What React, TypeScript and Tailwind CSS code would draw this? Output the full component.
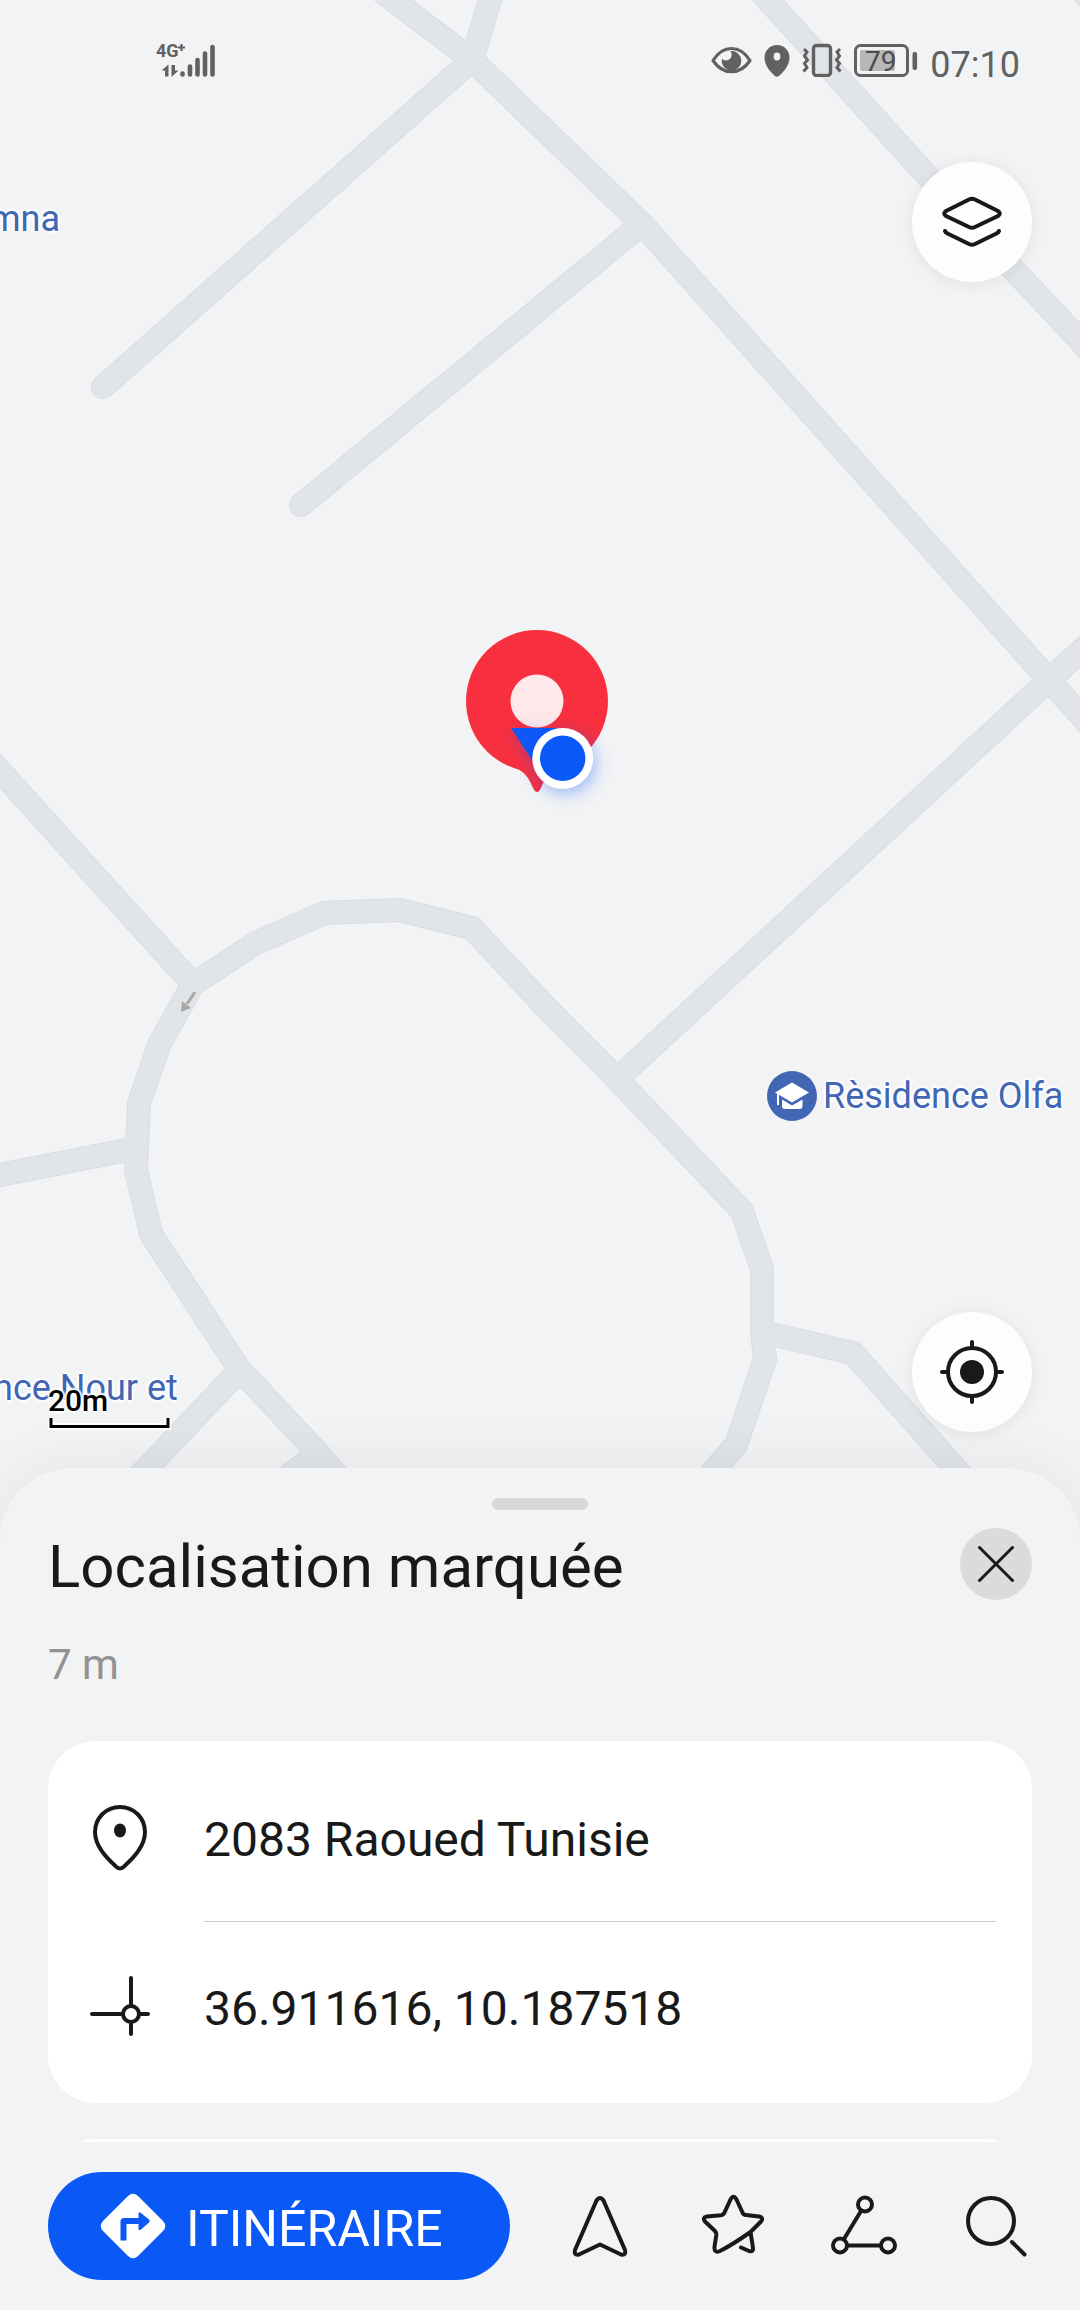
import type { ReactNode } from "react";

const ROADS = [
  "M385 -6L393 0L472 60L642 224L1049 680L1090 726",
  "M491 -10L490 0L472 60L103 387",
  "M642 224L301 505",
  "M762 -7L768 0L930 179L1011 267L1090 351",
  "M1070 -22L1110 20",
  "M1090 643L1049 680L617 1079",
  "M-10 760L0 771L193 984L256 943L324 913L400 910L472 928L540 1001L617 1079L742 1211L762 1269L762 1332L765 1359L736 1445L715 1469L690 1496",
  "M193 984L160 1043L139 1103L137 1148L136 1170L151 1234L240 1370L318 1453L350 1490",
  "M-10 1177L0 1175L137 1148",
  "M240 1370L146 1469L110 1506",
  "M318 1454L290 1474L262 1500",
  "M762 1332L853 1353L955 1468L1090 1620",
];

const HALO =
  "[text-shadow:0_0_2px_#fff,0_0_3px_#fff,2px_0_2px_#fff,-2px_0_2px_#fff,0_2px_2px_#fff,0_-2px_2px_#fff]";

function MapCanvas() {
  return (
    <svg
      className="absolute inset-0 h-full w-full"
      viewBox="0 0 1080 1540"
      preserveAspectRatio="xMidYMin slice"
      aria-hidden="true"
    >
      <g fill="none" strokeLinecap="round" strokeLinejoin="miter" strokeMiterlimit="3">
        <g stroke="#dadde1" strokeWidth="24">
          {ROADS.map((d) => (
            <path key={d} d={d} />
          ))}
        </g>
        <g stroke="#e1e4e9" strokeWidth="22">
          {ROADS.map((d) => (
            <path key={d} d={d} />
          ))}
        </g>
      </g>
      <path d="M195 992L187 1004" stroke="#aaa8a3" strokeWidth="3" />
      <path d="M181 1012L182 1001L191 1008Z" fill="#aaa8a3" />
    </svg>
  );
}

function PositionMarker() {
  return (
    <svg className="absolute top-[620px] left-[460px] h-[190px] w-[160px]" viewBox="0 0 160 190" aria-hidden="true">
      <defs>
        <filter id="glow" x="-60%" y="-60%" width="220%" height="220%">
          <feDropShadow dx="3" dy="5" stdDeviation="8" floodColor="#0a59f7" floodOpacity="0.36" />
        </filter>
      </defs>
      <circle cx="77" cy="81" r="71" fill="#f82f3f" />
      <path d="M47 143C62 151 67 153 73 168Q77 176 81 168C87 153 92 151 107 143Z" fill="#f82f3f" />
      <circle cx="77" cy="81" r="26.5" fill="#fee8ea" />
      <g filter="url(#glow)">
        <path d="M51 108H98L76 146Z" fill="#0a59f7" />
        <circle cx="102.7" cy="138.3" r="30.4" fill="#fff" />
      </g>
      <circle cx="102.7" cy="138.3" r="22.7" fill="#0a59f7" />
    </svg>
  );
}

function StatusBar() {
  return (
    <header className="relative flex items-baseline justify-between pt-[43px] pr-[60px] pl-[156px] text-[#616161]">
      <div className="relative h-[34px] w-[62px]">
        <span className="absolute -top-[2px] left-0 text-[18px] leading-[20px] font-bold">
          4G
        </span>
        <svg className="absolute inset-0" width="62" height="34" viewBox="2 0 62 34" fill="currentColor" aria-label="Signal">
          <path d="M24 4.500h7M27.500 1v7" stroke="currentColor" strokeWidth="2.200" />
          <path d="M14.500 33.500V21.500L7.500 27.500H11V33.500ZM17.500 22V34L24.500 27.500H21V22Z" />
          <g stroke="currentColor" strokeWidth="4.600" strokeLinecap="round">
            <path d="M28.500 30.500V31.500M36 23.500V31.500M43.500 17V31.500M51 10.500V31.500M58.500 4V31.500" />
          </g>
        </svg>
      </div>
      <div className="flex items-baseline gap-3">
        <svg width="41" height="34" viewBox="0 0 41 34" aria-label="Confort visuel">
          <path d="M2 17.500C12 1.500 29 1.500 39 17.500C29 32.500 12 32.500 2 17.500Z" fill="none" stroke="currentColor" strokeWidth="3.200" strokeLinejoin="round" />
          <path d="M20.500 8a9.800 9.800 0 1 1-9.600 7.700a5 5 0 1 0 8.300-7.600Z" fill="currentColor" />
        </svg>
        <svg width="26" height="34" viewBox="0 0 26 34" aria-label="Localisation">
          <path fillRule="evenodd" d="M13 2C20 2 25.500 7.500 25.500 14.500C25.500 22 20 28.500 15 33Q13 34.500 11 33C6 28.500.5 22 .5 14.500C.5 7.500 6 2 13 2ZM13 9.500a3.400 4 0 1 0 0 8a3.400 4 0 1 0 0-8Z" fill="currentColor" />
        </svg>
        <svg width="40" height="34" viewBox="0 0 40 34" fill="none" stroke="currentColor" aria-label="Vibreur">
          <rect x="11.500" y="2.500" width="17" height="30" rx="3" strokeWidth="3.400" />
          <path d="M2 6L5 9L2.500 13L5.500 17L2.500 20.500L5 24.500L1.500 28.500M38 6L35 9L37.500 13L34.500 17L37.500 20.500L35 24.500L38.500 28.500" strokeWidth="3" />
        </svg>
        <svg width="64" height="34" viewBox="0 0 64 34" aria-label="Batterie">
          <rect x="1.500" y="2.500" width="52" height="30" rx="5" fill="none" stroke="currentColor" strokeWidth="3" />
          <rect x="6" y="7" width="35" height="21" rx="2" fill="#b6b7b8" />
          <rect x="58.500" y="9" width="4.600" height="18" rx="2" fill="currentColor" />
          <text x="11" y="28" fontSize="28" fill="#4c4c4c">
            79
          </text>
        </svg>
        <time className="text-[36px] leading-[42px]">07:10</time>
      </div>
    </header>
  );
}

function RoundButton({ label, children }: { label: string; children: ReactNode }) {
  return (
    <button
      type="button"
      aria-label={label}
      className="flex size-[120px] items-center justify-center rounded-full bg-[#fdfdfd] text-[#191919] shadow-[0_2px_16px_rgba(0,0,0,0.08)]"
    >
      {children}
    </button>
  );
}

function StrokeIcon({ children }: { children: ReactNode }) {
  return (
    <svg
      className="size-[72px] shrink-0"
      viewBox="0 0 72 72"
      fill="none"
      stroke="currentColor"
      strokeWidth="4"
      strokeLinecap="round"
      strokeLinejoin="round"
      aria-hidden="true"
    >
      {children}
    </svg>
  );
}

function InfoRow({ icon, text, divider }: { icon: ReactNode; text: string; divider?: boolean }) {
  return (
    <li className="flex items-center gap-12 pl-9">
      {icon}
      <span
        className={
          divider
            ? "flex h-[169px] flex-1 items-center border-b border-[#cacaca] pt-1.5"
            : "flex h-[168px] flex-1 items-center pt-1.5"
        }
      >
        {text}
      </span>
    </li>
  );
}

function ActionButton({ label, children }: { label: string; children: ReactNode }) {
  return (
    <button type="button" aria-label={label}>
      <StrokeIcon>{children}</StrokeIcon>
    </button>
  );
}

export default function App() {
  return (
    <main className="flex min-h-screen flex-col overflow-hidden bg-[#f2f3f5] font-['Roboto',sans-serif] text-[#191919]">
      <section className="relative -mb-[72px] flex flex-1 flex-col overflow-hidden" aria-label="Carte">
        <MapCanvas />
        <span className={`absolute top-[198px] -left-[11px] text-[36px] leading-[42px] text-[#4166b4] ${HALO}`}>mna</span>
        <span className={`absolute top-[1367px] -left-[7px] text-[36px] leading-[42px] whitespace-nowrap text-[#4166b4] ${HALO}`}>
          nce Nour et
        </span>
        <div className="absolute top-[1071px] left-[767px] flex items-center gap-1.5">
          <svg width="50" height="50" viewBox="0 0 50 50" aria-hidden="true">
            <circle cx="25" cy="25" r="25" fill="#4166b4" />
            <path d="M25 11.500L42 21.500L25 31.500L8 21.500Z" fill="#fff" />
            <path d="M11 22V34" stroke="#fff" strokeWidth="2" />
            <path d="M15 28.500L25 34.500L35.500 28.500V35Q35.500 38 32.500 38H18Q15 38 15 35Z" fill="#fff" />
          </svg>
          <span className={`text-[36px] leading-[42px] whitespace-nowrap text-[#4166b4] ${HALO}`}>Rèsidence Olfa</span>
        </div>
        <PositionMarker />
        <StatusBar />
        <div className="relative flex flex-1 flex-col items-end justify-between px-12 pt-[76px] pb-[108px]">
          <RoundButton label="Calques">
            <StrokeIcon>
              <path d="M33 13.500Q36 12 39 13.500L61 24.500Q66.500 27.500 61 30.500L39 41Q36 42.500 33 41L11 30.500Q5.500 27.500 11 24.500Z" />
              <path d="M9 45Q9.500 46.500 11.500 47.500L33 58Q36 59.500 39 58L60.500 47.500Q62.500 46.500 63 45" />
            </StrokeIcon>
          </RoundButton>
          <div className="flex w-full items-end justify-between">
            <div className="flex flex-col">
              <span className={`text-[30px] leading-[34px] font-medium text-black ${HALO}`}>20m</span>
              <svg width="123" height="14" viewBox="0 0 123 14" fill="none" aria-hidden="true">
                <path d="M3 0V8.500H120V0" stroke="#fff" strokeWidth="7" />
                <path d="M3 0V8.500H120V0" stroke="#000" strokeWidth="3" />
              </svg>
            </div>
            <RoundButton label="Ma position">
              <StrokeIcon>
                <circle cx="36" cy="36" r="24" />
                <circle cx="36" cy="36" r="12" fill="currentColor" stroke="none" />
                <path d="M36 6V11M36 61V66M6 36H11M61 36H66" />
              </StrokeIcon>
            </RoundButton>
          </div>
        </div>
      </section>

      <section className="relative rounded-t-[72px] bg-[#f2f3f5] pt-[30px] shadow-[0_0_60px_rgba(0,0,0,0.07)]">
        <div className="mx-auto h-3 w-24 rounded-full bg-[#d8d8d8]" />
        <div className="flex items-center justify-between px-12 pt-[18px]">
          <h1 className="pt-1.5 text-[60px] leading-[66px]">Localisation marquée</h1>
          <button
            type="button"
            aria-label="Fermer"
            className="flex size-[72px] items-center justify-center rounded-full bg-[#dadbdc]"
          >
            <svg width="36" height="36" viewBox="0 0 36 36" fill="none" stroke="currentColor" strokeWidth="3" strokeLinecap="round" aria-hidden="true">
              <path d="M1.500 34.500L34.500 1.500M1.500 1.500L34.500 34.500" />
            </svg>
          </button>
        </div>
        <p className="px-12 pt-[41px] text-[42px] leading-[48px] text-[#919293]">7 m</p>
        <ul className="mx-12 mt-[52px] rounded-[48px] bg-white pt-3 pr-9 pb-[13px] text-[48px] leading-[56px]">
          <InfoRow
            divider
            text="2083 Raoued Tunisie"
            icon={
              <StrokeIcon>
                <path d="M36 5C50 5 61 16 61 30C61 44 50 55.500 39.500 65Q36 68 32.500 65C22 55.500 11 44 11 30C11 16 22 5 36 5Z" />
                <ellipse cx="36" cy="28.500" rx="6" ry="7" fill="currentColor" stroke="none" />
              </StrokeIcon>
            }
          />
          <InfoRow
            text="36.911616, 10.187518"
            icon={
              <StrokeIcon>
                <path d="M47 8V35M47 54V64M8 44H37M56 44H64" />
                <circle cx="47" cy="44" r="8" />
              </StrokeIcon>
            }
          />
        </ul>
        <div className="mx-12 mt-9 h-[3px] overflow-hidden">
          <div className="h-24 rounded-[48px] bg-white" />
        </div>
        <nav className="flex items-center px-12 py-[30px]" aria-label="Actions">
          <button
            type="button"
            className="mr-[54px] flex h-[108px] flex-1 items-center gap-5 rounded-full bg-[#0a59f7] pl-13 text-[50px] leading-[60px] text-white"
          >
            <svg width="66" height="66" viewBox="0 0 66 66" aria-hidden="true">
              <path d="M28 3Q33-1.500 38 3L63 28Q67.500 33 63 38L38 63Q33 67.500 28 63L3 38Q-1.500 33 3 28Z" fill="#fff" />
              <path d="M20.500 47.500V28.500Q20.500 25 24 25H38.500V21Q38.500 18 41 20L49 26.500Q50.500 28 49 29.500L41 36.500Q38.500 38.500 38.500 35.500V31H26.500V47.500Z" fill="#0a59f7" />
            </svg>
            <span className="pt-1.5">ITINÉRAIRE</span>
          </button>
          <div className="flex gap-15">
            <ActionButton label="Naviguer">
              <path d="M32.500 10.500Q36 5.500 39.500 10.500L61 60Q62.500 65.500 57 64.500L36 54.500L15 64.500Q9.500 65.500 11 60Z" />
            </ActionButton>
            <ActionButton label="Ajouter aux favoris">
              <path d="M45 57.500L53 61Q57.500 62.500 57 58L54.500 42M54.500 42L65 31.500Q68 27.500 63 26.500L50 25Q47.500 25 46.500 22.500L40.500 9.500Q37.500 4 34.500 9.500L28.500 22.500Q27.500 25 25 25.300L11 26.500Q6 27.500 9 31.500L18.500 40.500Q20.500 42.500 20.300 45L18.500 57Q18 63.500 24 61C36 55 46 48 54.500 42" />
            </ActionButton>
            <ActionButton label="Partager">
              <circle cx="37" cy="14.500" r="7" />
              <circle cx="12" cy="55.500" r="7" />
              <circle cx="60" cy="55.500" r="7" />
              <path d="M33 21L16 49M20 55.500H52" />
            </ActionButton>
            <ActionButton label="Rechercher">
              <circle cx="31" cy="31" r="23" />
              <path d="M52 52L64.500 64.500" />
            </ActionButton>
          </div>
        </nav>
      </section>
    </main>
  );
}
